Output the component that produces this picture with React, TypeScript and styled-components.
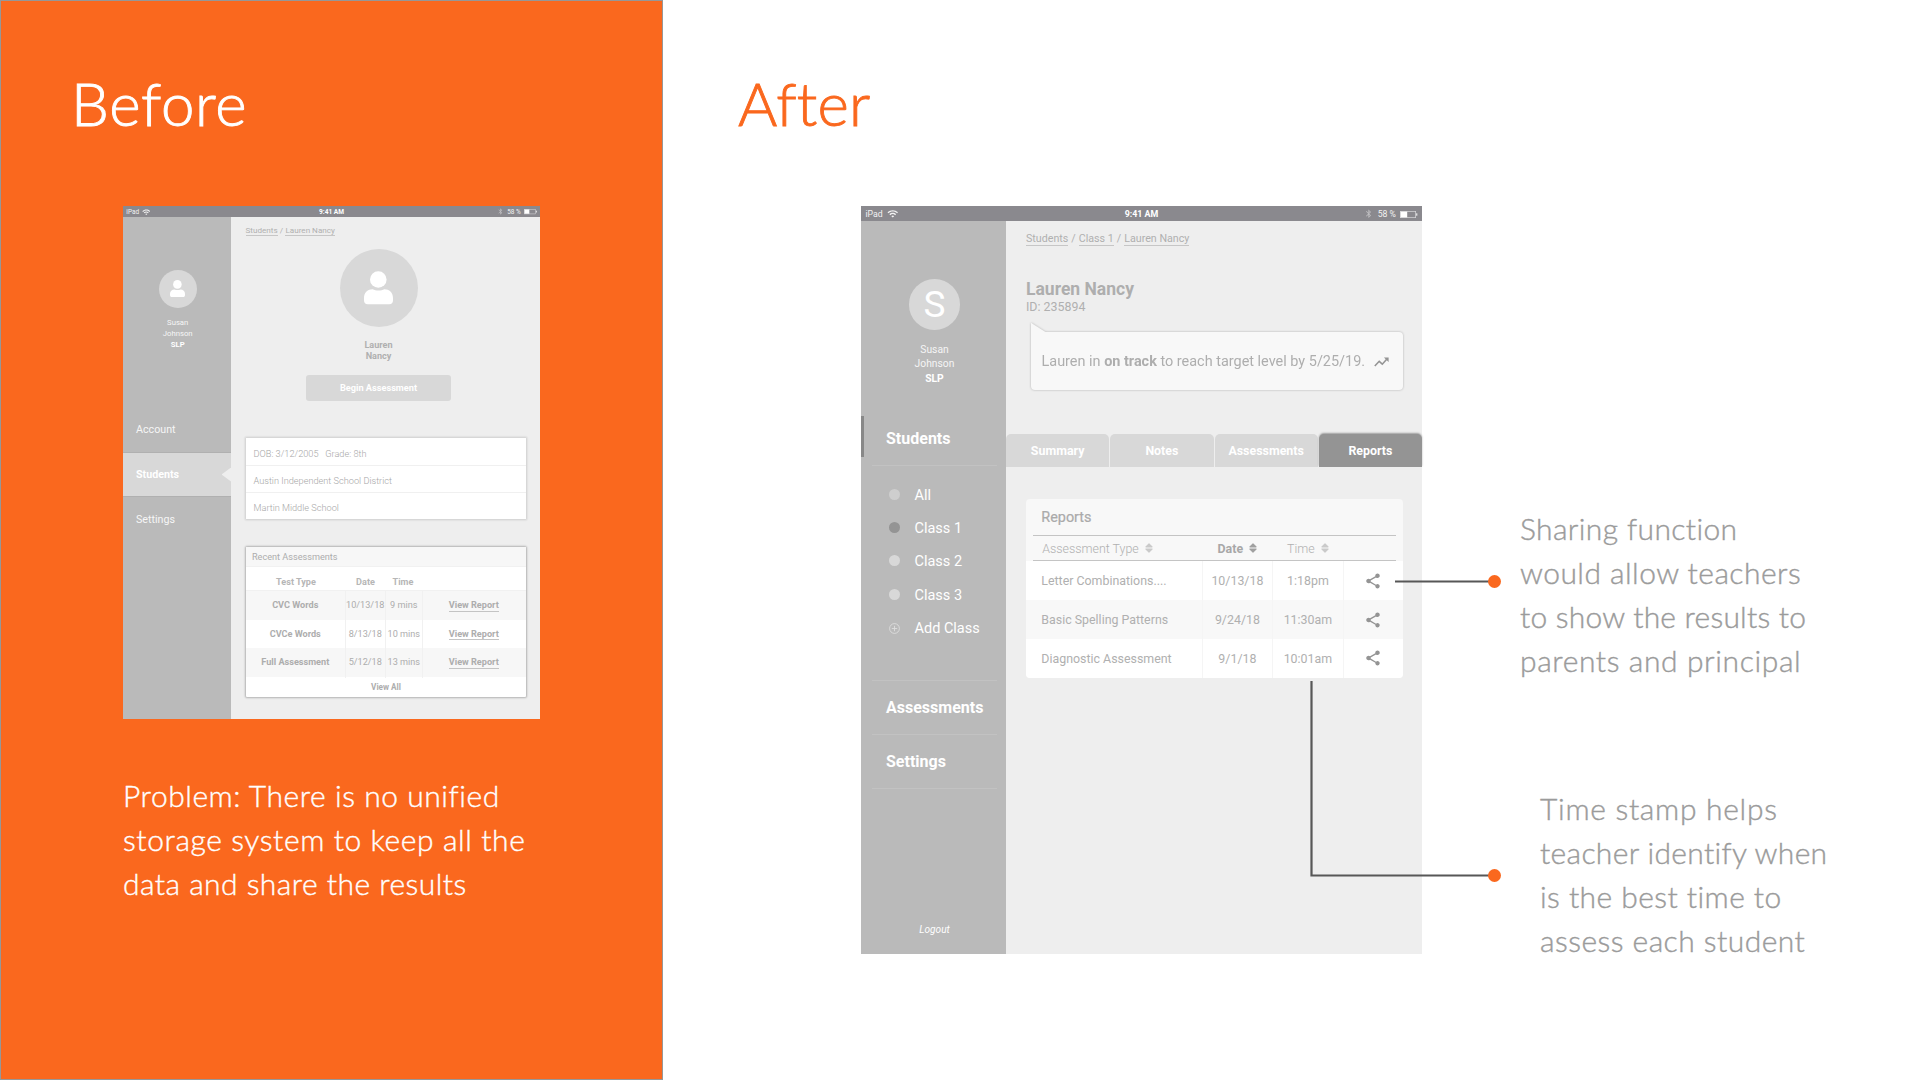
import React from "react";
import styled, { createGlobalStyle, css } from "styled-components";
import { MdWifi, MdBluetooth, MdShare } from "react-icons/md";

const GlobalStyle = createGlobalStyle`
  * { box-sizing: border-box; }
  body { margin: 0; background: #fff; overflow: hidden; }
`;

const orange = "#fa681e";

const Slide = styled.main`
  position: relative;
  display: flex;
  width: 1920px;
  height: 1080px;
  background: #fff;
  font-family: Roboto, "Liberation Sans", sans-serif;
  white-space: nowrap;
`;

const BeforePanel = styled.section`
  width: 663px;
  padding: 66px 0 0 122px;
  background: ${orange};
  border: 1px solid #979797;
`;

const AfterPanel = styled.section`
  flex: 1;
  padding: 67px 0 0 75px;
`;

const Title = styled.h1<{ $color: string; $shift?: number; $track: number }>`
  margin: 0 0 67px ${(p) => p.$shift ?? 0}px;
  height: 72px;
  font: 300 60px/72px Lato, "Liberation Sans", sans-serif;
  letter-spacing: ${(p) => p.$track}px;
  color: ${(p) => p.$color};
  -webkit-text-stroke: 0.9px ${(p) => p.$color};
`;

const Copy = styled.div<{ $color: string; $top?: number; $indent?: number }>`
  padding: ${(p) => p.$top ?? 0}px 0 0 ${(p) => p.$indent ?? 0}px;
  font: 300 30px/44px Lato, "Liberation Sans", sans-serif;
  color: ${(p) => p.$color};
  -webkit-text-stroke: 0.4px ${(p) => p.$color};
`;

const CopyLine = styled.div<{ $track: number }>`
  height: 44px;
  letter-spacing: ${(p) => p.$track}px;
`;

const AfterRow = styled.div`
  display: flex;
  padding-left: 123px;
`;

const Notes = styled.div`
  display: flex;
  flex-direction: column;
  gap: 103.5px;
  padding: 300px 0 0 98px;
`;

const Tablet = styled.div<{ $w: number; $h: number }>`
  display: flex;
  flex-direction: column;
  width: ${(p) => p.$w}px;
  height: ${(p) => p.$h}px;
  background: #eee;
`;

const Body = styled.div`
  display: flex;
  flex: 1;
  min-height: 0;
`;

/* ---------- status bar ---------- */

const StatusBar = styled.div<{ $s: number }>`
  display: grid;
  grid-template-columns: 1fr auto 1fr;
  align-items: center;
  height: ${(p) => 15 * p.$s}px;
  padding: ${(p) => `${p.$s}px ${4.5 * p.$s}px 0`};
  background: #8a898e;
  color: #f2f2f2;
  font-size: ${(p) => 8.7 * p.$s}px;
  line-height: 1;
`;

const StatusSide = styled.div<{ $s: number; $end?: boolean }>`
  display: flex;
  align-items: center;
  gap: ${(p) => 4 * p.$s}px;
  justify-content: ${(p) => (p.$end ? "flex-end" : "flex-start")};
`;

const Clock = styled.b<{ $s: number }>`
  font-size: ${(p) => 8.9 * p.$s}px;
  color: #fff;
`;

function Status({ scale }: { scale: number }) {
  return (
    <StatusBar $s={scale}>
      <StatusSide $s={scale}>
        iPad
        <MdWifi size={11.5 * scale} />
      </StatusSide>
      <Clock $s={scale}>9:41 AM</Clock>
      <StatusSide $s={scale} $end>
        <MdBluetooth size={9.5 * scale} opacity={0.5} />
        <span>58 %</span>
        <svg width={17.5 * scale} height={7 * scale} viewBox="0 0 17.5 7">
          <rect x="0.35" y="0.35" width="15.3" height="6.3" fill="none" stroke="#d8d8da" strokeWidth="0.7" />
          <rect x="0.6" y="0.6" width="6.6" height="5.8" fill="#fff" />
          <rect x="16.2" y="2.3" width="1.1" height="2.4" fill="#f2f2f2" />
        </svg>
      </StatusSide>
    </StatusBar>
  );
}

/* ---------- shared parts ---------- */

const Avatar = styled.div<{ $size: number }>`
  display: flex;
  align-items: center;
  justify-content: center;
  flex: none;
  width: ${(p) => p.$size}px;
  height: ${(p) => p.$size}px;
  border-radius: 50%;
  background: #d8d8d8;
  color: #fff;
  font-size: 37px;
  line-height: 1;
`;

const Person = ({ width }: { width: number }) => (
  <svg width={width} height={(width * 33.4) / 29} viewBox="0 0 29 33.4" fill="#fff">
    <circle cx="14.3" cy="8.5" r="8.3" />
    <path d="M0 29.4v-2.6c0-5.2 3.8-8.6 8.6-8.6 3.2 1.8 8.6 1.8 11.8 0 4.8 0 8.6 3.4 8.6 8.6v2.6c0 2.3-1.4 3.8-3.7 3.8H3.7C1.4 33.2 0 31.7 0 29.4z" />
  </svg>
);

const Crumbs = styled.div<{ $size: number; $lh: number }>`
  display: flex;
  gap: ${(p) => p.$size * 0.28}px;
  font-size: ${(p) => p.$size}px;
  line-height: ${(p) => p.$lh}px;
  color: #b0b0b0;
`;

const Crumb = styled.a`
  border-bottom: 1px solid #c6c6c6;
`;

const Strong = styled.b`
  color: #fff;
`;

/* ---------- before tablet ---------- */

const OldSide = styled.aside`
  display: flex;
  flex-direction: column;
  align-items: center;
  width: 108px;
  padding-top: 52.7px;
  background: #bababa;
  color: #f6f6f6;
`;

const OldProfile = styled.div`
  display: flex;
  flex-direction: column;
  align-items: center;
  height: 136.9px;
  padding-left: 1.4px;
`;

const OldName = styled.div`
  margin-top: 10.3px;
  font-size: 7.7px;
  line-height: 10.8px;
  text-align: center;
`;

const OldNav = styled.div<{ $active?: boolean }>`
  display: flex;
  align-items: center;
  align-self: stretch;
  justify-content: space-between;
  height: 45.3px;
  padding-left: 13px;
  font-size: 10.7px;
  ${(p) =>
    p.$active &&
    css`
      background: #d8d8d8;
      border-top: 1px solid #b0b0b0;
      border-bottom: 1px solid #b0b0b0;
      color: #fff;
      font-weight: 700;
    `}
`;

const Notch = styled.i`
  width: 9.5px;
  height: 14px;
  background: #eee;
  clip-path: polygon(0 50%, 100% 0, 100% 100%);
`;

const OldMain = styled.div`
  flex: 1;
  padding: 8px 14.5px 0 14.5px;
`;

const Hero = styled.div`
  display: flex;
  flex-direction: column;
  align-items: center;
  width: 145px;
  margin: 13px 0 37px 60.5px;
`;

const HeroName = styled.b`
  margin: 12.5px 0 13.5px;
  color: #b0b0b0;
  font-size: 9.1px;
  line-height: 11px;
  text-align: center;
`;

const Begin = styled.div`
  align-self: stretch;
  height: 26px;
  border-radius: 3px;
  background: #d8d8d8;
  color: #fff;
  font-size: 9.2px;
  font-weight: 700;
  line-height: 26px;
  text-align: center;
`;

const InfoCard = styled.div`
  height: 81px;
  margin-bottom: 28px;
  background: #fff;
  box-shadow: 0 0 2px 1px rgba(0, 0, 0, 0.14);
`;

const InfoRow = styled.div`
  height: 27px;
  padding: 1.5px 0 0 8px;
  font-size: 9.2px;
  font-weight: 300;
  line-height: 28px;
  color: #a6a6a6;
  white-space: pre;
  & + & {
    border-top: 1.5px solid #f0f0f0;
    padding-top: 0.5px;
  }
`;

const OldTable = styled.div`
  height: 150px;
  background: #fff;
  border-radius: 1px;
  box-shadow: 0 0 2px 1px rgba(0, 0, 0, 0.25);
  color: #adadad;
  font-size: 9.15px;
`;

const OldTitle = styled.div`
  height: 19.5px;
  padding-left: 6.5px;
  background: #f7f7f7;
  border-bottom: 1px solid #f1f1f1;
  line-height: 20px;
`;

const OldGrid = styled.div<{ $h: number; $striped?: boolean }>`
  display: grid;
  grid-template-columns: 99.5px 39.5px 37.5px 1fr;
  height: ${(p) => p.$h}px;
  line-height: ${(p) => p.$h + 1}px;
  text-align: center;
  ${(p) => p.$striped && "background: #f7f7f7;"}
  > span + span, > b + span {
    border-left: 1px solid #f1f1f1;
  }
`;

const OldHead = styled.div`
  display: grid;
  grid-template-columns: 101px 38px 37px;
  height: 24.5px;
  border-bottom: 1px solid #f1f1f1;
  color: #b6b6b6;
  font-size: 9.1px;
  font-weight: 700;
  line-height: 30px;
  text-align: center;
`;

const ViewLink = styled.b`
  display: inline-block;
  height: 11.5px;
  margin-right: 1px;
  line-height: 11px;
  border-bottom: 1px solid #c4c4c4;
`;

const ViewAll = styled.b`
  display: block;
  padding-left: 1px;
  font-size: 8.2px;
  line-height: 20px;
  text-align: center;
`;

const oldRows = [
  ["CVC Words", "10/13/18", "9 mins"],
  ["CVCe Words", "8/13/18", "10 mins"],
  ["Full Assessment", "5/12/18", "13 mins"],
];

function BeforeTablet() {
  return (
    <Tablet $w={417} $h={513}>
      <Status scale={0.74} />
      <Body>
        <OldSide>
          <OldProfile>
            <Avatar $size={38}>
              <Person width={15} />
            </Avatar>
            <OldName>
              Susan
              <br />
              Johnson
              <br />
              <Strong>SLP</Strong>
            </OldName>
          </OldProfile>
          <OldNav>Account</OldNav>
          <OldNav $active>
            Students
            <Notch />
          </OldNav>
          <OldNav>Settings</OldNav>
        </OldSide>
        <OldMain>
          <Crumbs $size={8.1} $lh={10}>
            <Crumb>Students</Crumb>/<Crumb>Lauren Nancy</Crumb>
          </Crumbs>
          <Hero>
            <Avatar $size={78}>
              <Person width={29} />
            </Avatar>
            <HeroName>
              Lauren
              <br />
              Nancy
            </HeroName>
            <Begin>Begin Assessment</Begin>
          </Hero>
          <InfoCard>
            <InfoRow>{"DOB: 3/12/2005   Grade: 8th"}</InfoRow>
            <InfoRow>Austin Independent School District</InfoRow>
            <InfoRow>Martin Middle School</InfoRow>
          </InfoCard>
          <OldTable>
            <OldTitle>Recent Assessments</OldTitle>
            <OldHead>
              <span>Test Type</span>
              <span>Date</span>
              <span>Time</span>
            </OldHead>
            {oldRows.map(([name, date, time], i) => (
              <OldGrid key={name} $h={28.7} $striped={i % 2 === 0}>
                <b>{name}</b>
                <span>{date}</span>
                <span>{time}</span>
                <span>
                  <ViewLink>View Report</ViewLink>
                </span>
              </OldGrid>
            ))}
            <ViewAll>View All</ViewAll>
          </OldTable>
        </OldMain>
      </Body>
    </Tablet>
  );
}

/* ---------- after tablet ---------- */

const Side = styled.aside`
  display: flex;
  flex-direction: column;
  align-items: center;
  width: 145px;
  background: #bababa;
  color: #fff;
`;

const Profile = styled.div`
  display: flex;
  flex-direction: column;
  align-items: center;
  height: 191px;
  padding: 58px 0 0 2px;
`;

const Name = styled.div`
  margin-top: 13.2px;
  font-size: 10.3px;
  line-height: 14.6px;
  text-align: center;
  color: #f5f5f5;
`;

const NavRow = styled.div`
  display: flex;
  align-items: center;
  align-self: stretch;
  height: 53px;
  font-size: 16px;
  font-weight: 700;
`;

const Marker = styled.i<{ $on?: boolean }>`
  width: 3px;
  height: 41px;
  margin: -4px 22px 0 0;
  background: ${(p) => (p.$on ? "#888" : "transparent")};
`;

const Divider = styled.hr`
  flex: none;
  align-self: stretch;
  height: 1px;
  margin: 0 9px 0 11px;
  border: 0;
  background: #c2c2c2;
`;

const ClassList = styled.div`
  align-self: stretch;
  height: 213.5px;
  padding: 12.5px 0 0 28px;
`;

const ClassItem = styled.div`
  display: flex;
  align-items: center;
  gap: 14.5px;
  height: 33.4px;
  font-size: 14.5px;
`;

const Dot = styled.i<{ $color: string }>`
  width: 11px;
  height: 11px;
  margin-top: -2px;
  border-radius: 50%;
  background: ${(p) => p.$color};
`;

const Logout = styled.em`
  margin-top: auto;
  padding: 0 0 17px 2px;
  font-size: 10.1px;
  line-height: 14px;
`;

const Main = styled.div`
  flex: 1;
  padding-top: 11.5px;
`;

const Inset = styled.div`
  padding: 0 19px 0 20px;
`;

const StudentName = styled.h2`
  margin: 33px 0 0;
  font-size: 17.5px;
  line-height: 21px;
  color: #aeaeae;
`;

const StudentId = styled.div`
  font-size: 12.4px;
  line-height: 14px;
  color: #b0b0b0;
`;

const Bubble = styled.div`
  position: relative;
  display: flex;
  align-items: center;
  gap: 9px;
  height: 58px;
  margin: 18px 0 44.5px 4.5px;
  padding: 2px 0 0 11px;
  border-radius: 4px;
  background: #f8f8f8;
  filter: drop-shadow(0 0 1.2px rgba(0, 0, 0, 0.26));
  font-size: 14.45px;
  color: #aeaeae;
  &::before {
    content: "";
    position: absolute;
    left: 0;
    top: -9px;
    width: 15px;
    height: 14px;
    background: #f8f8f8;
    clip-path: polygon(0 0, 100% 9.5px, 100% 100%, 0 100%);
  }
`;

const Tabs = styled.div`
  display: grid;
  grid-template-columns: repeat(4, 1fr);
  column-gap: 1px;
  height: 32px;
  margin-bottom: 33.3px;
`;

const Tab = styled.div<{ $on?: boolean }>`
  border-radius: 5px 5px 0 0;
  background: ${(p) => (p.$on ? "#949494" : "#d8d8d8")};
  box-shadow: ${(p) => (p.$on ? "0 -1px 2px rgba(0, 0, 0, 0.35)" : "none")};
  color: #fff;
  font-size: 12.4px;
  font-weight: 700;
  line-height: 33px;
  text-align: center;
  clip-path: inset(-4px -4px 0 -4px);
`;

const Card = styled.div`
  overflow: hidden;
  border-radius: 4px;
  background: #f8f8f8;
  color: #b0b0b0;
  font-size: 12.4px;
`;

const CardTitle = styled.div`
  height: 35.5px;
  padding-left: 15.3px;
  font-size: 14.4px;
  line-height: 37.5px;
  color: #aaa;
  -webkit-text-stroke: 0.2px #aaa;
`;

const HeadRow = styled.div`
  display: grid;
  grid-template-columns: 168.5px 70.5px 70.5px 1fr;
  align-items: center;
  height: 26.5px;
  margin: 0 7.5px 0 7px;
  border-top: 1px solid #c4c4c4;
  border-bottom: 1px solid #c4c4c4;
`;

const Sortable = styled.div<{ $on?: boolean; $pad: number }>`
  display: flex;
  align-items: center;
  gap: 6px;
  padding-left: ${(p) => p.$pad}px;
  font-weight: ${(p) => (p.$on ? 700 : 300)};
  color: ${(p) => (p.$on ? "#a8a8a8" : "#b0b0b0")};
`;

const Row = styled.div<{ $striped?: boolean }>`
  display: grid;
  grid-template-columns: 175.5px 70.5px 70.5px 1fr;
  height: 38.8px;
  line-height: 39px;
  background: ${(p) => (p.$striped ? "#f8f8f8" : "#fff")};
`;

const Cell = styled.div<{ $first?: boolean }>`
  display: flex;
  align-items: center;
  justify-content: ${(p) => (p.$first ? "flex-start" : "center")};
  padding-left: ${(p) => (p.$first ? 15.3 : 0.3)}px;
  border-left: ${(p) => (p.$first ? "0" : "1.5px solid #f5f5f5")};
`;

const ShareIcon = styled(MdShare)`
  width: 18px;
  height: 18px;
  color: #949494;
`;

const SortIcon = ({ color }: { color: string }) => (
  <svg width="8" height="10" viewBox="0 0 8 10" fill={color}>
    <path d="M3.6.4a.6.6 0 0 1 .8 0L7.5 3.6c.3.3.1.9-.4.9H.9c-.5 0-.7-.6-.4-.9z" />
    <path d="M3.6 9.6a.6.6 0 0 0 .8 0L7.5 6.4c.3-.3.1-.9-.4-.9H.9c-.5 0-.7.6-.4.9z" />
  </svg>
);

const TrendIcon = () => (
  <svg width="15" height="10" viewBox="0 0 15 10">
    <path d="M.8 9 5.2 4.3 8.3 7.2 12.7 2.3" fill="none" stroke="#949494" strokeWidth="1.6" />
    <path d="M9.9.4h4.7v4.7z" fill="#949494" />
  </svg>
);

const AddIcon = () => (
  <svg width="11" height="11" viewBox="0 0 11 11" fill="none" stroke="#dedede" strokeWidth="0.9">
    <circle cx="5.5" cy="5.5" r="4.9" />
    <path d="M5.5 2.8v5.4M2.8 5.5h5.4" />
  </svg>
);

const classes = [
  ["All", "#cecece"],
  ["Class 1", "#949494"],
  ["Class 2", "#d8d8d8"],
  ["Class 3", "#d8d8d8"],
];

const reports = [
  ["Letter Combinations....", "10/13/18", "1:18pm"],
  ["Basic Spelling Patterns", "9/24/18", "11:30am"],
  ["Diagnostic Assessment", "9/1/18", "10:01am"],
];

function AfterTablet() {
  return (
    <Tablet $w={561} $h={748}>
      <Status scale={1} />
      <Body>
        <Side>
          <Profile>
            <Avatar $size={50.6}>S</Avatar>
            <Name>
              Susan
              <br />
              Johnson
              <br />
              <Strong>SLP</Strong>
            </Name>
          </Profile>
          <NavRow>
            <Marker $on />
            Students
          </NavRow>
          <Divider />
          <ClassList>
            {classes.map(([label, color]) => (
              <ClassItem key={label}>
                <Dot $color={color} />
                {label}
              </ClassItem>
            ))}
            <ClassItem>
              <AddIcon />
              Add Class
            </ClassItem>
          </ClassList>
          <Divider />
          {["Assessments", "Settings"].map((label) => (
            <React.Fragment key={label}>
              <NavRow>
                <Marker />
                {label}
              </NavRow>
              <Divider />
            </React.Fragment>
          ))}
          <Logout>Logout</Logout>
        </Side>
        <Main>
          <Inset>
            <Crumbs $size={10.7} $lh={12}>
              <Crumb>Students</Crumb>/<Crumb>Class 1</Crumb>/<Crumb>Lauren Nancy</Crumb>
            </Crumbs>
            <StudentName>Lauren Nancy</StudentName>
            <StudentId>ID: 235894</StudentId>
            <Bubble>
              <span>
                Lauren in <b>on track</b> to reach target level by 5/25/19.
              </span>
              <TrendIcon />
            </Bubble>
          </Inset>
          <Tabs>
            <Tab>Summary</Tab>
            <Tab>Notes</Tab>
            <Tab>Assessments</Tab>
            <Tab $on>Reports</Tab>
          </Tabs>
          <Inset>
            <Card>
              <CardTitle>Reports</CardTitle>
              <HeadRow>
                <Sortable $pad={9.3}>
                  Assessment Type <SortIcon color="#cacaca" />
                </Sortable>
                <Sortable $pad={16} $on>
                  Date <SortIcon color="#a0a0a0" />
                </Sortable>
                <Sortable $pad={15}>
                  Time <SortIcon color="#cacaca" />
                </Sortable>
              </HeadRow>
              {reports.map(([name, date, time], i) => (
                <Row key={name} $striped={i === 1}>
                  <Cell $first>{name}</Cell>
                  <Cell>{date}</Cell>
                  <Cell>{time}</Cell>
                  <Cell>
                    <ShareIcon />
                  </Cell>
                </Row>
              ))}
            </Card>
          </Inset>
        </Main>
      </Body>
    </Tablet>
  );
}

/* Callout lines run over the tablet and end beside the notes. */
const Connectors = styled.svg`
  position: absolute;
  left: 1300px;
  top: 570px;
`;

export default function App() {
  return (
    <Slide>
      <GlobalStyle />
      <BeforePanel>
        <Title $color="#fff" $shift={-52} $track={0.7}>
          Before
        </Title>
        <BeforeTablet />
        <Copy $color="#fff" $top={54}>
          <CopyLine $track={0.55}>Problem: There is no unified</CopyLine>
          <CopyLine $track={0.6}>storage system to keep all the</CopyLine>
          <CopyLine $track={0.46}>data and share the results</CopyLine>
        </Copy>
      </BeforePanel>
      <AfterPanel>
        <Title $color={orange} $track={0.2}>
          After
        </Title>
        <AfterRow>
          <AfterTablet />
          <Notes>
            <Copy $color="#9b9b9b">
              <CopyLine $track={0.37}>Sharing function</CopyLine>
              <CopyLine $track={0.46}>would allow teachers</CopyLine>
              <CopyLine $track={0.22}>to show the results to</CopyLine>
              <CopyLine $track={0.61}>parents and principal</CopyLine>
            </Copy>
            <Copy $color="#9b9b9b" $indent={20}>
              <CopyLine $track={0.7}>Time stamp helps</CopyLine>
              <CopyLine $track={0.33}>teacher identify when</CopyLine>
              <CopyLine $track={0.44}>is the best time to</CopyLine>
              <CopyLine $track={0.46}>assess each student</CopyLine>
            </Copy>
          </Notes>
        </AfterRow>
      </AfterPanel>
      <Connectors width="210" height="320" viewBox="0 0 210 320" fill="none">
        <path d="M95 11.5H190M11.5 111V305.5H190" stroke="#575757" strokeWidth="2.2" />
        <circle cx="194.5" cy="11.5" r="6.5" fill={orange} />
        <circle cx="194.5" cy="305.5" r="6.5" fill={orange} />
      </Connectors>
    </Slide>
  );
}
